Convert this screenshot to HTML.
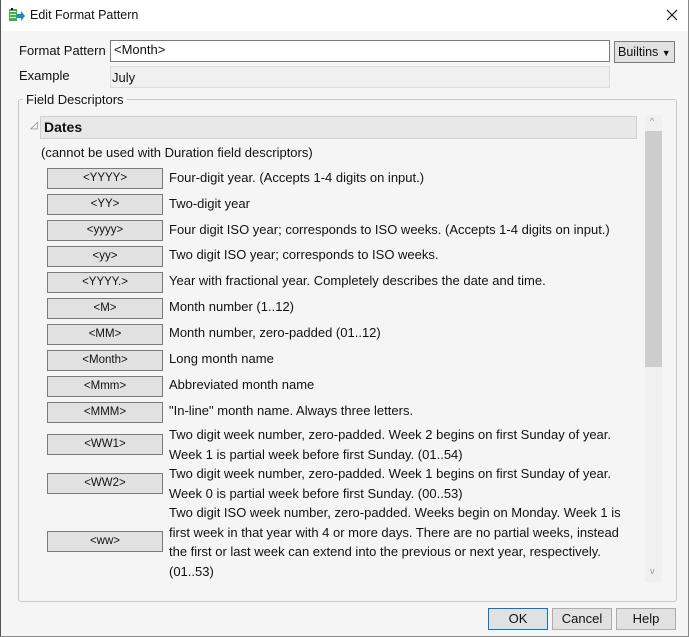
<!DOCTYPE html>
<html><head><style>
*{box-sizing:border-box;margin:0;padding:0}
body{width:689px;height:637px;background:#f5f5f5;font-family:"Liberation Sans",sans-serif;font-size:13px;color:#111;position:relative;overflow:hidden}
.a{position:absolute;white-space:nowrap}
.btn{position:absolute;left:47px;width:116px;height:21px;background:#e1e1e1;border:1px solid #7a7a7a;font-size:11.5px;text-align:center;line-height:19px}
.d{position:absolute;left:169px;line-height:19.5px;white-space:nowrap}
.bb{position:absolute;top:608px;height:22px;background:#e1e1e1;border:1px solid #adadad;text-align:center;line-height:20px;font-size:13px}
</style></head><body>
<div class="a" style="left:0;top:0;width:689px;height:31px;background:#fff"></div>
<div class="a" style="left:0;top:0;width:1px;height:637px;background:#555"></div>
<div class="a" style="left:688px;top:0;width:1px;height:637px;background:#888"></div>
<div class="a" style="left:0;top:636px;width:689px;height:1px;background:#888"></div>
<svg class="a" style="left:8px;top:7px" width="18" height="16"><rect x="1" y="2" width="8" height="12" fill="#3ab54a"/><rect x="2" y="4" width="6" height="1" fill="#fff"/><rect x="2" y="7" width="6" height="1" fill="#fff"/><rect x="2" y="10" width="6" height="1" fill="#fff"/><path d="M9 7h4v-3l4 5-4 5v-3H9z" fill="#1e88c8"/><rect x="3" y="1" width="2" height="2" fill="#111"/></svg>
<div class="a" style="left:30px;top:8px;font-size:12.5px">Edit Format Pattern</div>
<svg class="a" style="left:666px;top:9px" width="12" height="12"><path d="M1 1L11 11M11 1L1 11" stroke="#111" stroke-width="1.2"/></svg>
<div class="a" style="left:19px;top:43px">Format Pattern</div>
<div class="a" style="left:110px;top:40px;width:500px;height:22px;background:#fff;border:1px solid #7a7a7a;padding:1px 3px">&lt;Month&gt;</div>
<div class="a" style="left:614px;top:41px;width:61px;height:22px;background:#e1e1e1;border:1px solid #7a7a7a;padding:3px 3px;font-size:12.5px">Builtins <span style="font-size:9px">▼</span></div>
<div class="a" style="left:19px;top:68px">Example</div>
<div class="a" style="left:110px;top:66px;width:500px;height:22px;background:#f0f0f0;border:1px solid #ddd;padding:3px 1px">July</div>
<div class="a" style="left:18px;top:99px;width:659px;height:503px;border:1px solid #c8c8c8;border-radius:3px"></div>
<div class="a" style="left:23px;top:92px;background:#f5f5f5;padding:0 3px">Field Descriptors</div>
<div class="a" style="left:30px;top:120px;font-size:10px;color:#777">◿</div>
<div class="a" style="left:40px;top:116px;width:597px;height:23px;background:#e8e8e8;border:1px solid #cfcfcf;font-weight:bold;font-size:14px;padding:2px 3px">Dates</div>
<div class="a" style="left:645px;top:115px;width:17px;height:467px;background:#f0f0f0"></div>
<div class="a" style="left:645px;top:131px;width:17px;height:236px;background:#cdcdcd"></div>
<div class="a" style="left:650px;top:116px;font-size:9px;color:#999">^</div>
<div class="a" style="left:650px;top:566px;font-size:9px;color:#999">v</div>
<div class="a" style="left:41px;top:145px">(cannot be used with Duration field descriptors)</div>
<div class="btn" style="top:168px">&lt;YYYY&gt;</div><div class="d" style="top:168px">Four-digit year. (Accepts 1-4 digits on input.)</div>
<div class="btn" style="top:194px">&lt;YY&gt;</div><div class="d" style="top:194px">Two-digit year</div>
<div class="btn" style="top:220px">&lt;yyyy&gt;</div><div class="d" style="top:220px">Four digit ISO year; corresponds to ISO weeks. (Accepts 1-4 digits on input.)</div>
<div class="btn" style="top:246px">&lt;yy&gt;</div><div class="d" style="top:245px">Two digit ISO year; corresponds to ISO weeks.</div>
<div class="btn" style="top:272px">&lt;YYYY.&gt;</div><div class="d" style="top:271px">Year with fractional year. Completely describes the date and time.</div>
<div class="btn" style="top:298px">&lt;M&gt;</div><div class="d" style="top:297px">Month number (1..12)</div>
<div class="btn" style="top:324px">&lt;MM&gt;</div><div class="d" style="top:323px">Month number, zero-padded (01..12)</div>
<div class="btn" style="top:350px">&lt;Month&gt;</div><div class="d" style="top:349px">Long month name</div>
<div class="btn" style="top:376px">&lt;Mmm&gt;</div><div class="d" style="top:375px">Abbreviated month name</div>
<div class="btn" style="top:402px">&lt;MMM&gt;</div><div class="d" style="top:401px">"In-line" month name. Always three letters.</div>
<div class="btn" style="top:434px">&lt;WW1&gt;</div><div class="d" style="top:425px">Two digit week number, zero-padded. Week 2 begins on first Sunday of year.<br>Week 1 is partial week before first Sunday. (01..54)</div>
<div class="btn" style="top:473px">&lt;WW2&gt;</div><div class="d" style="top:464px">Two digit week number, zero-padded. Week 1 begins on first Sunday of year.<br>Week 0 is partial week before first Sunday. (00..53)</div>
<div class="btn" style="top:531px">&lt;ww&gt;</div><div class="d" style="top:503px">Two digit ISO week number, zero-padded. Weeks begin on Monday. Week 1 is<br>first week in that year with 4 or more days. There are no partial weeks, instead<br>the first or last week can extend into the previous or next year, respectively.<br>(01..53)</div>
<div class="bb" style="left:488px;width:60px;border-color:#0078d7">OK</div>
<div class="bb" style="left:552px;width:60px">Cancel</div>
<div class="bb" style="left:616px;width:60px">Help</div>
</body></html>
